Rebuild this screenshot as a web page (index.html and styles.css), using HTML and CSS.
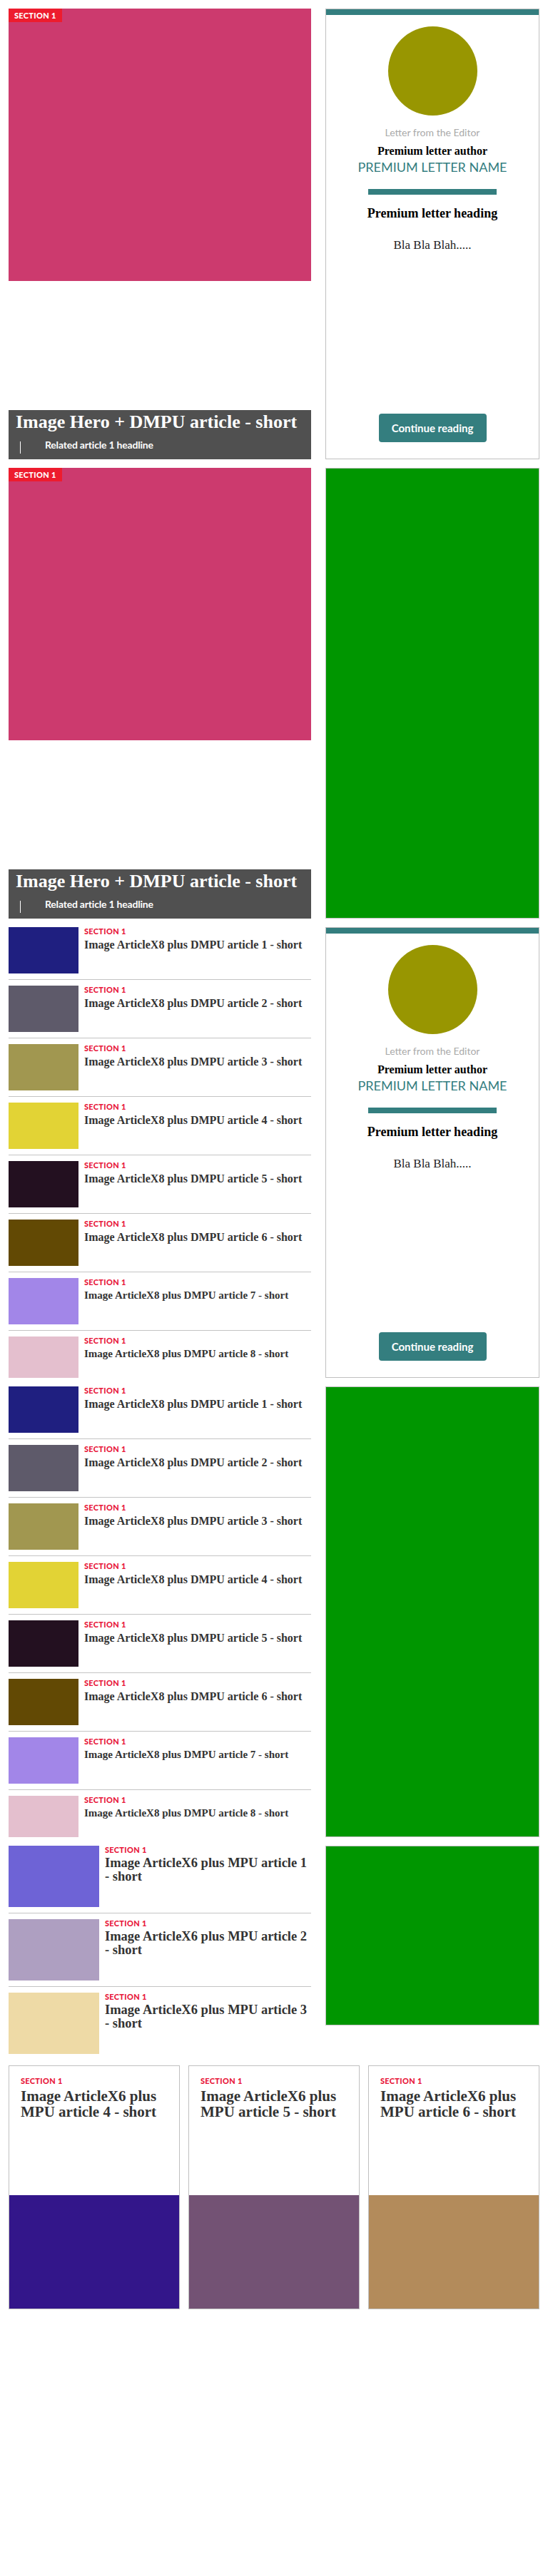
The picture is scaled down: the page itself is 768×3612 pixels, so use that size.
FILE: index.html
```html
<!DOCTYPE html>
<html lang="en">
<head>
<meta charset="utf-8">
<title>Layout</title>
<link rel="stylesheet" href="styles.css">
</head>
<body>
<div class="page">

  <section class="row">
    <article class="hero">
      <div class="hero-img pink"><span class="tag">SECTION 1</span></div>
      <div class="hero-box">
        <h2>Image Hero + DMPU article - short</h2>
        <div class="related"><span class="bar"></span><span class="rel-txt">Related article 1 headline</span></div>
      </div>
    </article>
    <aside class="letter">
      <div class="letter-top"></div>
      <div class="avatar"></div>
      <p class="kicker">Letter from the Editor</p>
      <p class="author">Premium letter author</p>
      <p class="name">PREMIUM LETTER NAME</p>
      <div class="rule"></div>
      <p class="heading">Premium letter heading</p>
      <p class="body">Bla Bla Blah.....</p>
      <a class="btn">Continue reading</a>
    </aside>
  </section>

  <section class="row">
    <article class="hero">
      <div class="hero-img pink"><span class="tag">SECTION 1</span></div>
      <div class="hero-box">
        <h2>Image Hero + DMPU article - short</h2>
        <div class="related"><span class="bar"></span><span class="rel-txt">Related article 1 headline</span></div>
      </div>
    </article>
    <aside class="dmpu"></aside>
  </section>

  <section class="row">
    <div class="list">
      <article class="item"><div class="thumb c1"></div><div class="meta"><p class="label">SECTION 1</p><h3>Image ArticleX8 plus DMPU article 1 - short</h3></div></article>
      <article class="item"><div class="thumb c2"></div><div class="meta"><p class="label">SECTION 1</p><h3>Image ArticleX8 plus DMPU article 2 - short</h3></div></article>
      <article class="item"><div class="thumb c3"></div><div class="meta"><p class="label">SECTION 1</p><h3>Image ArticleX8 plus DMPU article 3 - short</h3></div></article>
      <article class="item"><div class="thumb c4"></div><div class="meta"><p class="label">SECTION 1</p><h3>Image ArticleX8 plus DMPU article 4 - short</h3></div></article>
      <article class="item"><div class="thumb c5"></div><div class="meta"><p class="label">SECTION 1</p><h3>Image ArticleX8 plus DMPU article 5 - short</h3></div></article>
      <article class="item"><div class="thumb c6"></div><div class="meta"><p class="label">SECTION 1</p><h3>Image ArticleX8 plus DMPU article 6 - short</h3></div></article>
      <article class="item"><div class="thumb c7"></div><div class="meta"><p class="label">SECTION 1</p><h3 class="sm">Image ArticleX8 plus DMPU article 7 - short</h3></div></article>
      <article class="item"><div class="thumb c8"></div><div class="meta"><p class="label">SECTION 1</p><h3 class="sm">Image ArticleX8 plus DMPU article 8 - short</h3></div></article>
    </div>
    <aside class="letter">
      <div class="letter-top"></div>
      <div class="avatar"></div>
      <p class="kicker">Letter from the Editor</p>
      <p class="author">Premium letter author</p>
      <p class="name">PREMIUM LETTER NAME</p>
      <div class="rule"></div>
      <p class="heading">Premium letter heading</p>
      <p class="body">Bla Bla Blah.....</p>
      <a class="btn">Continue reading</a>
    </aside>
  </section>

  <section class="row">
    <div class="list">
      <article class="item"><div class="thumb c1"></div><div class="meta"><p class="label">SECTION 1</p><h3>Image ArticleX8 plus DMPU article 1 - short</h3></div></article>
      <article class="item"><div class="thumb c2"></div><div class="meta"><p class="label">SECTION 1</p><h3>Image ArticleX8 plus DMPU article 2 - short</h3></div></article>
      <article class="item"><div class="thumb c3"></div><div class="meta"><p class="label">SECTION 1</p><h3>Image ArticleX8 plus DMPU article 3 - short</h3></div></article>
      <article class="item"><div class="thumb c4"></div><div class="meta"><p class="label">SECTION 1</p><h3>Image ArticleX8 plus DMPU article 4 - short</h3></div></article>
      <article class="item"><div class="thumb c5"></div><div class="meta"><p class="label">SECTION 1</p><h3>Image ArticleX8 plus DMPU article 5 - short</h3></div></article>
      <article class="item"><div class="thumb c6"></div><div class="meta"><p class="label">SECTION 1</p><h3>Image ArticleX8 plus DMPU article 6 - short</h3></div></article>
      <article class="item"><div class="thumb c7"></div><div class="meta"><p class="label">SECTION 1</p><h3 class="sm">Image ArticleX8 plus DMPU article 7 - short</h3></div></article>
      <article class="item"><div class="thumb c8"></div><div class="meta"><p class="label">SECTION 1</p><h3 class="sm">Image ArticleX8 plus DMPU article 8 - short</h3></div></article>
    </div>
    <aside class="dmpu"></aside>
  </section>

  <section class="row row-auto">
    <div class="list list-x6">
      <article class="item"><div class="thumb d1"></div><div class="meta"><p class="label">SECTION 1</p><h3>Image ArticleX6 plus MPU article 1 -&nbsp;short</h3></div></article>
      <article class="item"><div class="thumb d2"></div><div class="meta"><p class="label">SECTION 1</p><h3>Image ArticleX6 plus MPU article 2 -&nbsp;short</h3></div></article>
      <article class="item"><div class="thumb d3"></div><div class="meta"><p class="label">SECTION 1</p><h3>Image ArticleX6 plus MPU article 3 -&nbsp;short</h3></div></article>
    </div>
    <aside class="mpu"></aside>
  </section>

  <section class="cards">
    <article class="card"><div class="card-text"><p class="label">SECTION 1</p><h3>Image ArticleX6 plus MPU article 4 - short</h3></div><div class="card-img e1"></div></article>
    <article class="card"><div class="card-text"><p class="label">SECTION 1</p><h3>Image ArticleX6 plus MPU article 5 - short</h3></div><div class="card-img e2"></div></article>
    <article class="card"><div class="card-text"><p class="label">SECTION 1</p><h3>Image ArticleX6 plus MPU article 6 - short</h3></div><div class="card-img e3"></div></article>
  </section>

</div>
</body>
</html>
```

FILE: styles.css
```css
* {
  box-sizing: border-box;
  margin: 0;
  padding: 0;
}

body {
  margin: 0;
  background: #ffffff;
  font-family: "Liberation Serif", serif;
}

.page {
  padding: 12px;
}

.row {
  display: grid;
  grid-template-columns: 424px 300px;
  column-gap: 20px;
  height: 632px;
  margin-bottom: 12px;
}

.row-auto {
  height: auto;
  align-items: start;
}

/* hero */
.hero {
  display: flex;
  flex-direction: column;
  justify-content: space-between;
}

.hero-img {
  position: relative;
  height: 382px;
}

.pink { background: #cc3a6e; }

.tag {
  position: absolute;
  left: 0;
  top: 0;
  height: 19px;
  padding: 0 8px;
  background: #ed1c2e;
  color: #ffffff;
  font: 900 11px/19px Lato, sans-serif;
  letter-spacing: 0.3px;
}

.hero-box {
  height: 69px;
  background: #505050;
  padding: 4px 10px 0;
}

.hero-box h2 {
  font: 700 26px/26px "Liberation Serif", serif;
  color: #ffffff;
  white-space: nowrap;
}

.related {
  display: flex;
  align-items: flex-start;
  margin-top: 10px;
}

.related .bar {
  width: 1px;
  height: 17px;
  margin: 4px 0 0 6px;
  background: #ffffff;
}

.rel-txt {
  margin-left: 34px;
  font: 700 14px/18px Lato, sans-serif;
  letter-spacing: -0.2px;
  color: #ffffff;
}

/* letter card */
.letter {
  display: flex;
  flex-direction: column;
  align-items: center;
  text-align: center;
  border: 1px solid #c0c0c0;
  padding-bottom: 23px;
}

.letter-top {
  align-self: stretch;
  height: 8px;
  background: #347e7f;
}

.avatar {
  width: 125px;
  height: 125px;
  margin-top: 16px;
  border-radius: 50%;
  background: #989601;
}

.kicker {
  margin-top: 15px;
  font: 400 14px/18px Lato, sans-serif;
  color: #aaaaaa;
}

.author {
  margin-top: 7px;
  font: 700 16px/20px "Liberation Serif", serif;
  color: #000000;
}

.name {
  margin-top: 1px;
  font: 400 18px/22px Lato, sans-serif;
  color: #347e7f;
}

.rule {
  width: 180px;
  height: 8px;
  margin-top: 20px;
  background: #347e7f;
}

.heading {
  margin-top: 15px;
  font: 700 18px/22px "Liberation Serif", serif;
  color: #000000;
}

.body {
  margin-top: 23px;
  font: 400 17px/21px "Liberation Serif", serif;
  color: #222222;
}

.btn {
  display: block;
  margin-top: auto;
  width: 151px;
  height: 40px;
  border-radius: 4px;
  background: #347e7f;
  color: #ffffff;
  font: 700 15px/40px Lato, sans-serif;
  text-align: center;
}

/* ads */
.dmpu,
.mpu {
  border: 1px solid #c0c0c0;
  background: #009600;
}

.mpu {
  height: 252px;
}

/* lists */
.list {
  overflow: hidden;
}

.item {
  display: flex;
  gap: 8px;
  padding: 8px 0;
  border-bottom: 1px solid #c4c4c4;
}

.item:first-child {
  padding-top: 0;
}

.thumb {
  flex: none;
  width: 98px;
  height: 65px;
}

.label {
  font: 900 11px/12px Lato, sans-serif;
  letter-spacing: 0.3px;
  color: #e8173a;
}

.item h3 {
  margin-top: 3px;
  font: 700 16px/19px "Liberation Serif", serif;
  color: #333333;
}

.item h3.sm {
  font-size: 15px;
}

.list-x6 .thumb {
  width: 127px;
  height: 86px;
}

.list-x6 .item h3 {
  font-size: 18.5px;
  line-height: 19px;
}

.list-x6 .item:last-child {
  border-bottom: none;
  padding-bottom: 4px;
}

.c1 { background: #1f1f80; }
.c2 { background: #5e5a6a; }
.c3 { background: #a19750; }
.c4 { background: #e2d335; }
.c5 { background: #231020; }
.c6 { background: #624904; }
.c7 { background: #a286e8; }
.c8 { background: #e4bfce; }

.d1 { background: #6e63d6; }
.d2 { background: #ae9fc1; }
.d3 { background: #eedaa6; }

/* cards */
.cards {
  display: grid;
  grid-template-columns: repeat(3, 240px);
  column-gap: 12px;
}

.card {
  display: flex;
  flex-direction: column;
  border: 1px solid #c0c0c0;
}

.card-text {
  height: 181px;
  padding: 15px 16px 0;
}

.card h3 {
  margin-top: 4px;
  font: 700 21px/22px "Liberation Serif", serif;
  color: #333333;
}

.card-img {
  height: 159px;
}

.e1 { background: #33168a; }
.e2 { background: #735274; }
.e3 { background: #b38b5b; }
```
